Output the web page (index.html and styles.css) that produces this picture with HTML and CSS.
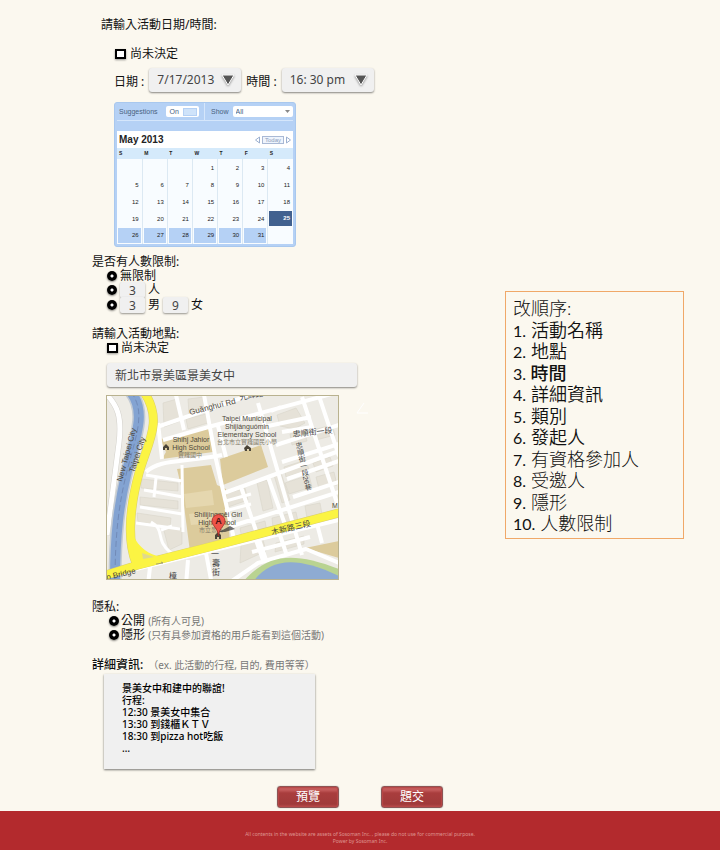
FILE: index.html
```
<!DOCTYPE html>
<html lang="zh-Hant">
<head>
<meta charset="utf-8">
<title>Sosoman</title>
<link rel="stylesheet" href="styles.css">
</head>
<body>
<main class="page">
<form class="form">
  <section class="when">
    <h2 class="title when-title">請輸入活動日期/時間:</h2>
    <label class="option when-undecided"><input type="checkbox" class="tick">尚未決定</label>
    <div class="pickers">
      <label for="date">日期 :</label>
      <span class="picker"><select id="date"><option>7/17/2013</option></select>
        <svg class="arrow" viewBox="0 0 14 12"><path d="M1 1H13L7 11Z" fill="#555" stroke="#fff" stroke-width="1"/></svg></span>
      <label for="time">時間 :</label>
      <span class="picker"><select id="time"><option>16: 30 pm</option></select>
        <svg class="arrow" viewBox="0 0 14 12"><path d="M1 1H13L7 11Z" fill="#555" stroke="#fff" stroke-width="1"/></svg></span>
    </div>
    <div class="calendar">
      <div class="cal-bar">
        <div class="cal-suggest"><span>Suggestions</span><button type="button" class="switch">On<i></i></button></div>
        <label class="cal-show">Show <span class="cal-filter"><select><option>All</option></select><svg viewBox="0 0 5 4"><path d="M0 0H5L2.500 3Z" fill="#888"/></svg></span></label>
      </div>
      <div class="cal-panel">
        <div class="cal-head">
          <h3>May 2013</h3>
          <button type="button" class="nav" aria-label="Previous"><svg viewBox="0 0 5 8"><path d="M4.500 1V7L.5 4Z"/></svg></button>
          <button type="button" class="today">Today</button>
          <button type="button" class="nav" aria-label="Next"><svg viewBox="0 0 5 8"><path d="M.5 1V7L4.500 4Z"/></svg></button>
        </div>
        <table>
          <thead><tr><th>S</th><th>M</th><th>T</th><th>W</th><th>T</th><th>F</th><th>S</th></tr></thead>
          <tbody>
            <tr><td></td><td></td><td></td><td>1</td><td>2</td><td>3</td><td>4</td></tr>
            <tr><td>5</td><td>6</td><td>7</td><td>8</td><td>9</td><td>10</td><td>11</td></tr>
            <tr><td>12</td><td>13</td><td>14</td><td>15</td><td>16</td><td>17</td><td>18</td></tr>
            <tr><td>19</td><td>20</td><td>21</td><td>22</td><td>23</td><td>24</td><td class="picked"><span>25</span></td></tr>
            <tr class="later"><td><span>26</span></td><td><span>27</span></td><td><span>28</span></td><td><span>29</span></td><td><span>30</span></td><td><span>31</span></td><td></td></tr>
          </tbody>
        </table>
      </div>
    </div>
  </section>

  <section class="limit">
    <h2 class="title">是否有人數限制:</h2>
    <div class="choice"><input type="radio" name="limit" id="l0" class="dot"><label for="l0">無限制</label></div>
    <div class="choice"><input type="radio" name="limit" id="l1" class="dot" aria-label="人數"><input class="count" id="n1" value="3"><label for="n1">人</label></div>
    <div class="choice"><input type="radio" name="limit" id="l2" class="dot" aria-label="男女人數"><input class="count" id="n2" value="3"><label for="n2">男</label><input class="count" id="n3" value="9"><label for="n3">女</label></div>
  </section>

  <section class="where">
    <h2 class="title">請輸入活動地點:</h2>
    <label class="option"><input type="checkbox" class="tick">尚未決定</label>
    <input class="address" aria-label="活動地點" value="新北市景美區景美女中">
    <div class="map-row">
    <svg class="map" viewBox="0 0 233 185" role="img" aria-label="地圖">
      <rect width="233" height="185" fill="#edebe5"/>
      <g fill="#e6e2d8" stroke="#d9d5ca" stroke-width=".6">
        <path d="M57 8l14-4 3 22-16 6zM82 4l16-2 2 12-17 5zM80 24l20-5 2 9-20 6zM36 84l36 4v8l-37-3zM34 102l38 4v8l-38-4zM31 118l34 5-1 9-32-5zM57 132l19 1v16l-13 6zM119 99l20-6 3 12-20 7zM151 88l10-3 6 28-10 3zM168 80l7-2 9 27-8 3zM171 20l19-7 9 15-11 6-14-3zM178 72l22-7 3 10-23 7zM179 88l24-8 3 12-23 7zM207 68l17-6 3 9-17 6zM210 82l18-5 3 13-18 4zM134 133l25-7 2 11-25 7zM135 150l22-5 3 11-26 12zM166 123l24-6 2 9-25 7zM170 148l28-7v8l-29 8zM199 111l15-3 2 11-15 4zM207 35l19-5 3 10-19 5zM184 39l14-4 3 11-15 4z"/>
      </g>
      <g fill="#dccb9c">
        <path d="M54 44L102 32 107 57 56 64 60 57zM71 74L105 70 111 90 120 94 124 148 84 157 76 95zM114 64L155 50 162 72 117 90zM199 153L233 146V163Z"/>
      </g>
      <path d="M78 99l28-4 2 15-28 3zM83 119l24-3 2 12-24 2z" fill="#e5d7af"/>
      <g fill="none" stroke="#fff" stroke-width="4" stroke-linejoin="round">
        <path d="M-2-3C12 10 16 22 13 48L1 140" stroke="#d3d1cb" stroke-width="6"/>
        <path d="M-2-3C12 10 16 22 13 48L1 140" stroke-width="5"/>
        <path d="M40 77C54 64 74 68 116 60M48 33L150 -2M52 28L56 64M70 0L78 35M98 0L109 60M109 60L128 144M106 31L233 -3M57 45L106 31M112 31L120 62M118 98L162 82 233 56M152 8L196 160M162 82L182 138M135 92L160 165M165 16L175 12M170 50L233 30M176 67L233 49M181 84L233 66M187 102L233 87M126 131L233 97M196 2L233 114M212 -2L233 61M162 31L205 22M176 37L206 32"/>
        <path d="M40 80L76 86M38 95L77 102M34 112L76 119M30 128L74 134M76 70L77 137M50 83L48 102M45 127C60 135 48 144 65 158M55 135L66 131M120 106L145 99M119 116L145 109" stroke-width="3"/>
        <path d="M30 174L233 125M44 172L42 190M82 165L80 190M100 158L106 190M150 145L158 168M172 134L180 158M210 125L216 148M120 190L152 168 200 154 233 168M146 157L204 142" stroke-width="4"/>
      </g>
      <path d="M136 188C160 160 184 155 233 174V188Z" fill="#b9d391"/>
      <path d="M146 188C164 164 188 160 233 181V188Z" fill="#8eabd2"/>
      <path d="M25-3C41 18 29 43 20 80C13 110 9 138 9 188" fill="none" stroke="#c3cbd4" stroke-width="13"/>
      <path d="M25-3C41 18 29 43 20 80C13 110 9 138 9 188" fill="none" stroke="#83a3d2" stroke-width="10"/>
      <path d="M25-3C41 18 29 43 20 80C13 110 9 138 9 188" fill="none" stroke="#687fac" stroke-width=".7" stroke-dasharray="6 3"/>
      <g fill="none" stroke="#dacf6a" stroke-width="9"><path d="M38-3C58 26 41 49 33 78C24 111 21 145 30 168M-3 181L32 170 115 149 236 117"/></g>
      <g fill="none" stroke="#fbf443" stroke-width="8"><path d="M38-3C58 26 41 49 33 78C24 111 21 145 30 168M-3 181L32 170 115 149 236 117"/></g>
      <path d="M26 138C34 155 42 158 57 163L29 173Z" fill="#fbf443"/><path d="M36 158L48 162 37 164Z" fill="#dfd98e"/>
      <path d="M50 169l7-1-2-1" fill="none" stroke="#777" stroke-width=".6"/>
      <g class="map-text">
        <text class="wide" transform="translate(16 87) rotate(-75)">New Taipei City</text>
        <text class="wide" transform="translate(28 78) rotate(-72)">Taipei City</text>
        <text class="wide" transform="translate(84 20) rotate(-14)">Guǎnghuī Rd</text>
        <text x="85" y="47" text-anchor="middle">Shihj Jahior</text><text x="85" y="55" text-anchor="middle">High School</text><text class="small" x="84" y="62" text-anchor="middle">實踐國中</text>
        <text x="141" y="26" text-anchor="middle">Taipei Municipal</text><text x="141" y="34" text-anchor="middle">Shijiánguómin</text><text x="141" y="42" text-anchor="middle">Elementary School</text><text class="small" x="141" y="49" text-anchor="middle">台北市立實踐國民小學</text>
        <text x="112" y="122" text-anchor="middle">Shilijingmēi Girl</text><text x="111" y="130" text-anchor="middle">High School</text><text class="small" x="105" y="137" text-anchor="middle">市立景美</text>
        <text class="road" transform="translate(134 5) rotate(-10)">光輝路</text>
        <text class="road" transform="translate(187 42) rotate(-6)">忠順街一段</text>
        <text class="road" transform="translate(166 140) rotate(-13)">木新路三段</text>
        <text class="road up" x="0" y="0" transform="translate(192 47) rotate(-12)">忠順街一段26巷</text>
        <text class="road" x="63" y="184">樟</text><text class="road" x="105" y="162">一</text><text class="road" x="106" y="171">壽</text><text class="road" x="106" y="180">街</text>
        <text class="wide" transform="translate(1 185) rotate(-13)">o Bridge</text><text x="226" y="113">M</text>
      </g>
      <g fill="#4b4538"><path d="M57 52l3-3 3 3v3h-2v-2h-2v2h-2zM138 53l3-3 4 3v3h-2v-2h-2v2h-2zM109 140l3-3 3 3v4h-2v-2h-2v2h-2z"/></g>
      <path d="M113 137L124 131 129 134 119 137Z" fill="#333" opacity=".7"/>
      <path d="M112.500 141C112 133 106 131 106 126A6.500 6.500 0 0 1 119 126C119 131 113 133 112.500 141Z" fill="#ee5449" stroke="#a52925" stroke-width=".8"/>
      <text class="pin" x="112.500" y="129" text-anchor="middle">A</text>
      <rect x=".5" y=".5" width="232" height="184" fill="none" stroke="#b9b28f"/>
    </svg>
    <svg class="mark" viewBox="0 0 14 14"><path d="M9 1L2 11H13" fill="none" stroke="#fff" stroke-width="1"/></svg>
    </div>
  </section>

  <section class="privacy">
    <h2 class="title">隱私:</h2>
    <div class="choice"><input type="radio" name="privacy" id="p0" class="dot"><label for="p0">公開 <small>(所有人可見)</small></label></div>
    <div class="choice"><input type="radio" name="privacy" id="p1" class="dot"><label for="p1">隱形 <small>(只有具參加資格的用戶能看到這個活動)</small></label></div>
  </section>

  <section class="details">
    <label class="title" for="info"><b>詳細資訊:</b><small>（ex. 此活動的行程, 目的, 費用等等）</small></label>
    <textarea id="info">景美女中和建中的聯誼!
行程:
12:30 景美女中集合
13:30 到錢櫃ＫＴＶ
18:30 到pizza hot吃飯
…</textarea>
  </section>
</form>

<aside class="order">
  <p class="thin">改順序:</p>
  <p><span>1.</span> 活動名稱</p>
  <p><span>2.</span> 地點</p>
  <p class="strong"><span>3.</span> 時間</p>
  <p><span>4.</span> 詳細資訊</p>
  <p><span>5.</span> 類別</p>
  <p><span>6.</span> 發起人</p>
  <p class="thin"><span>7.</span> 有資格參加人</p>
  <p class="thin"><span>8.</span> 受邀人</p>
  <p class="thin"><span>9.</span> 隱形</p>
  <p class="thin"><span>10.</span> 人數限制</p>
</aside>
</main>

<div class="actions"><button type="button">預覽</button><button type="submit">題交</button></div>

<footer>
  <p>All contents in the website are assets of Sosoman Inc. , please do not use for commercial purpose.</p>
  <p>Power by Sosoman Inc.</p>
</footer>
</body>
</html>
```
FILE: styles.css
```
* { box-sizing: border-box; }

body {
  margin: 0;
  min-height: 100vh;
  display: flex;
  flex-direction: column;
  background: #fbf8ef;
  color: #111;
  font: 12px/14px "Noto Sans", "Noto Sans CJK TC", sans-serif;
}

h2, h3, p { margin: 0; font: inherit; }
input, select, button, textarea { margin: 0; font: inherit; color: inherit; }
svg { display: block; }

.page {
  display: grid;
  grid-template-columns: 413px minmax(179px, 1fr);
  padding: 18px 36px 0 92px;
}

.title { display: block; line-height: 14px; }
small { font-size: 10px; color: #777; }

/* Date and time */
.when { padding-left: 22px; }
.when-title { margin-left: -13px; }
.option { display: flex; align-items: center; gap: 4px; width: max-content; }
.when-undecided { margin: 15px 0 7px; padding-left: 1px; }

.tick {
  appearance: none;
  width: 11px;
  height: 10px;
  border: 2px solid #000;
  background: #fff;
  box-shadow: 0 1px 2px #0006;
}

.pickers { display: flex; align-items: center; gap: 5px; }
.pickers label { padding-top: 4px; white-space: nowrap; }
.picker {
  display: grid;
  align-items: center;
  border-radius: 3px;
  background: #f0f0f0;
  box-shadow: 0 1px 2px #0007;
}
.picker > * { grid-area: 1 / 1; }
.picker select {
  appearance: none;
  width: 92px;
  height: 24px;
  padding: 0 8px;
  border: 0;
  background: none;
  color: #444;
}
.arrow {
  justify-self: end;
  width: 14px;
  height: 12px;
  margin-right: 6px;
  pointer-events: none;
  filter: drop-shadow(0 1px 1px #0006);
}

/* Calendar */
.calendar {
  width: 182px;
  margin-top: 10px;
  padding: 0 2px 2px;
  border: 1px solid #a9c8ee;
  border-radius: 3px;
  background: #b5d1f5;
  color: #48627f;
  font: 7px/8px "Liberation Sans", sans-serif;
}
.cal-bar {
  display: grid;
  grid-template-columns: 88px 1fr;
  height: 18px;
  margin-bottom: 10px;
  border-bottom: 1px solid #d5e6fb;
}
.cal-suggest, .cal-show { display: flex; align-items: center; gap: 8px; }
.cal-suggest { padding-left: 2px; border-right: 1px solid #d5e6fb; }
.cal-show { padding-left: 6px; gap: 4px; }
.switch {
  display: flex;
  align-items: center;
  gap: 4px;
  height: 11px;
  padding: 0 2px 0 4px;
  border: 0;
  border-radius: 2px;
  background: #fff;
}
.switch i { width: 14px; height: 8px; background: #cfe3fa; border: 1px solid #b5d1f5; }
.cal-filter { flex: 1; display: grid; align-items: center; background: #fff; border-radius: 2px; }
.cal-filter > * { grid-area: 1 / 1; }
.cal-filter select { appearance: none; width: 100%; height: 11px; padding: 0 3px; border: 0; background: none; }
.cal-filter svg { justify-self: end; width: 5px; height: 4px; margin-right: 3px; }
.cal-panel { background: #f8fcff; }
.cal-head { display: flex; align-items: center; gap: 2px; height: 17px; padding: 0 2px; background: #fff; }
.cal-head h3 { flex: 1; color: #222; font-size: 10px; font-weight: bold; }
.today { height: 8px; padding: 0 2px; border: 1px solid #a9b9d5; background: #eef4fd; color: #8d9dbb; font-size: 6px; line-height: 6px; }
.nav { padding: 0; border: 0; background: none; }
.nav svg { width: 5px; height: 8px; fill: #fff; stroke: #9cb0d0; }
.calendar table { width: 100%; table-layout: fixed; border-collapse: collapse; color: #222; font-size: 6px; }
.calendar th { height: 11px; padding: 0 2px; background: #d5eafb; text-align: left; font-size: 5px; line-height: 5px; }
.calendar td { height: 17px; padding: 0 3px; border-right: 1px solid #dce9f3; text-align: right; }
.calendar td:last-child { border-right: 0; }
.later td, td.picked { padding: 1px; }
.later span, .picked span { display: block; padding: 3px 2px 4px; background: #b5d1f5; }
.calendar .picked span { background: #41618f; color: #fff; font-weight: bold; }

/* Head count */
.limit { margin-top: 8px; }
.choice { display: flex; align-items: center; gap: 3px; height: 14px; padding-left: 15px; }
.dot {
  appearance: none;
  width: 10px;
  height: 10px;
  border-radius: 50%;
  background: radial-gradient(circle, #fff 0 1px, #000 2px);
  box-shadow: 0 1px 2px #0007;
}
.count {
  width: 25px;
  height: 16px;
  padding: 0;
  border: 0;
  border-radius: 2px;
  background: #f0f0f0;
  box-shadow: 0 1px 2px #0006;
  color: #444;
  text-align: center;
}
.limit .choice:last-child { height: 16px; }

/* Place */
.where { margin: 14px 0 0; }
.where .option { padding-left: 15px; gap: 3px; }
.address {
  display: block;
  width: 250px;
  height: 24px;
  margin: 8px 0 8px 15px;
  padding: 0 8px;
  border: 0;
  border-radius: 3px;
  background: #f0f0f0;
  box-shadow: 0 1px 2px #0007;
  color: #444;
}
.map-row { display: flex; gap: 16px; padding-left: 14px; }
.map { width: 233px; height: 185px; }
.mark { width: 14px; height: 14px; margin-top: 7px; }
.map-text { font: 7px "Liberation Sans", "Noto Sans CJK TC", sans-serif; fill: #4c4739; }
.map-text .wide { font-size: 8px; }
.map-text .small { font-size: 6px; fill: #837d6c; }
.map-text .road { font-size: 8px; fill: #444; }
.map-text .up { font-size: 7px; writing-mode: vertical-rl; }
.pin { font: bold 9px "Liberation Sans", sans-serif; fill: #471311; }

/* Privacy and details */
.privacy { margin-top: 20px; }
.privacy .choice { padding-left: 17px; gap: 2px; }
.details { margin-top: 16px; }
.details .title { display: flex; gap: 5px; }
.details b { font-weight: 500; }
.details textarea {
  display: block;
  width: 211px;
  height: 95px;
  margin: 2px 0 0 12px;
  padding: 8px 18px;
  border: 0;
  background: #f0f0f0;
  box-shadow: 0 1px 2px #0008;
  color: #000;
  font-size: 10px;
  font-weight: 500;
  line-height: 12px;
  resize: none;
}

/* Ordering note */
.order {
  display: flex;
  flex-direction: column;
  justify-content: space-between;
  align-self: start;
  min-height: 248px;
  margin-top: 273px;
  padding: 6px 7px 4px;
  border: 1px solid #f0a868;
  font: 350 18px/21px Lato, "Noto Sans CJK TC", sans-serif;
}
.order span { font-size: 16px; font-weight: 400; }
.order .thin { font-weight: 300; }
.order .strong { font-weight: 500; }

/* Buttons and footer */
.actions { display: flex; justify-content: center; gap: 42px; margin: 17px 0 3px; }
.actions button {
  width: 62px;
  height: 22px;
  padding: 0;
  border: 1px solid #8d5454;
  border-radius: 3px;
  background: linear-gradient(#c45b5b 0 3px, #a93d3d 6px, #a03a3a 17px, #b64b4b);
  box-shadow: inset 0 0 1px 1px #b94747, 0 0 1px #777;
  color: #fff;
}

footer {
  flex: 1;
  padding: 20px 0 4px;
  background: #b32a2d;
  color: #df9691;
  font-size: 5px;
  line-height: 7px;
  text-align: center;
}
```
